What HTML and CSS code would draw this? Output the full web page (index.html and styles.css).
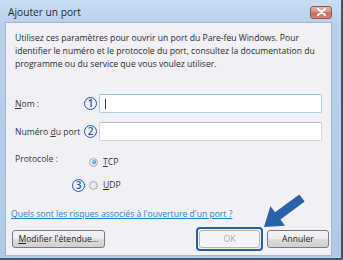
FILE: index.html
```html
<!DOCTYPE html>
<html lang="fr">
<head>
<meta charset="utf-8">
<link rel="stylesheet" href="styles.css">
</head>
<body>
<div class="window">
  <div class="titlebar">
    <span class="title">Ajouter un port</span>
    <span class="close"><svg width="11" height="8" viewBox="0 0 11 8"><path d="M2 1 L9 7 M9 1 L2 7" stroke="#fff" stroke-width="2.2" stroke-linecap="round"/></svg></span>
  </div>
  <div class="content">
    <p class="intro">Utilisez ces paramètres pour ouvrir un port du Pare-feu Windows. Pour identifier le numéro et le protocole du port, consultez la documentation du programme ou du service que vous voulez utiliser.</p>
    <div class="row row-name">
      <span class="label"><u>N</u>om :</span>
      <span class="num">1</span>
      <div class="input focus"><span class="caret"></span></div>
    </div>
    <div class="row row-port">
      <span class="label">Numéro <u>d</u>u port</span>
      <span class="num">2</span>
      <div class="input"></div>
    </div>
    <div class="proto">
      <span class="label plabel">Protocole :</span>
      <div class="radios">
        <div class="radio-row"><span class="radio on"></span><span class="rlabel"><u>T</u>CP</span></div>
        <div class="radio-row"><span class="num num3">3</span><span class="radio"></span><span class="rlabel"><u>U</u>DP</span></div>
      </div>
    </div>
    <a class="link" href="#">Quels sont les risques associés à l'ouverture d'un port ?</a>
    <div class="buttons">
      <button class="btn modify"><u>M</u>odifier l'étendue...</button>
      <span class="spacer"></span>
      <span class="focusring"><button class="btn ok" disabled>OK</button></span>
      <button class="btn cancel">Annuler</button>
    </div>
  </div>
  <svg class="arrow" width="343" height="260" viewBox="0 0 343 260">
    <polygon points="264,227 285,225.8 280.4,219.5 304.7,201.6 299.3,194.4 275,212.3 270.4,206" fill="#2b61a6"/>
  </svg>
</div>
</body>
</html>
```
FILE: styles.css
```css
* { box-sizing: border-box; }
html, body { margin: 0; padding: 0; }
body {
  width: 343px;
  height: 260px;
  overflow: hidden;
  font-family: "Open Sans", "Noto Sans", sans-serif;
  font-size: 8.6px;
  color: #222;
}
.window {
  position: relative;
  width: 343px;
  height: 260px;
  background: linear-gradient(180deg, #c9def2 0px, #b7d1ec 22px, #aecbea 100%);
  border-right: 2px solid #3f5670;
  border-bottom: 2px solid #3f5670;
  display: flex;
  flex-direction: column;
}
.titlebar {
  height: 22px;
  flex: none;
  display: flex;
  align-items: center;
  padding: 0 9px 0 8px;
}
.title {
  flex: 1;
  font-size: 10.2px;
  color: #1c2a3a;
  padding-top: 1px;
}
.close {
  width: 22px;
  height: 13px;
  margin-top: 2px;
  border: 1px solid #8d5a52;
  border-radius: 3px;
  background: linear-gradient(180deg, #e6b3a8 0%, #d98b7e 45%, #c8675a 55%, #d4867a 100%);
  display: flex;
  align-items: center;
  justify-content: center;
}
.content {
  flex: 1;
  min-height: 0;
  overflow: hidden;
  margin: 0 9px 2px 5px;
  background: #f1f0f5;
  border: 1px solid #9fb7cf;
  padding: 9px 8px 0 8px;
  display: flex;
  flex-direction: column;
}
.intro {
  margin: 0 0 0 1px;
  line-height: 13px;
  color: #2a2a2a;
  width: 300px;
  flex: none;
}
.row {
  display: flex;
  align-items: center;
  height: 19px;
  flex: none;
}
.row-name { margin-top: 23px; }
.row-port { margin-top: 9px; }
.label {
  color: #333;
  margin-left: 1px;
}
.row .label { width: 69px; }
.num {
  width: 13px;
  height: 13px;
  border: 1.2px solid #1d5aa6;
  border-radius: 50%;
  color: #1d5aa6;
  font-size: 10px;
  line-height: 11px;
  text-align: center;
  font-weight: 600;
  display: inline-flex;
  justify-content: center;
  align-items: center;
  flex: none;
}
.input {
  margin-left: 2px;
  width: 223px;
  height: 19px;
  background: #fff;
  border: 1px solid #cfd3dc;
  border-top-color: #b9bec7;
  border-radius: 2px;
  display: flex;
  align-items: center;
}
.input.focus {
  border-color: #a9cbe8;
  border-top-color: #8fbce2;
}
.caret {
  width: 1px;
  height: 10px;
  background: #333;
  margin-left: 5px;
}
.proto {
  margin-top: 12px;
  display: flex;
  flex: none;
}
.plabel { width: 74px; flex: none; }
.radios {
  display: flex;
  flex-direction: column;
}
.radio-row {
  display: flex;
  align-items: center;
  height: 14px;
  margin-top: 2px;
}
.radio-row + .radio-row { margin-top: 9px; margin-left: -17px; }
.num3 { margin-right: 4px; }
.radio {
  width: 9px;
  height: 9px;
  border-radius: 50%;
  border: 1px solid #a9acb2;
  background: radial-gradient(circle at 40% 40%, #f4f4f4, #d5d7da);
  position: relative;
  flex: none;
}
.radio.on::after {
  content: "";
  position: absolute;
  left: 1.5px;
  top: 1.5px;
  width: 4px;
  height: 4px;
  border-radius: 50%;
  background: radial-gradient(circle at 35% 35%, #7fd0ff, #1a6fc0);
}
.rlabel {
  margin-left: 5px;
  color: #333;
}
.link {
  margin: 16px 0 0 -3px;
  color: #1f7fc5;
  text-decoration: underline;
  align-self: flex-start;
  line-height: 12px;
  flex: none;
}
.buttons {
  display: flex;
  align-items: center;
  margin: 7px 0 0 -2px;
  flex: none;
}
.spacer { flex: 1; }
.btn {
  font-family: inherit;
  font-size: 8.6px;
  height: 18px;
  padding: 0;
  border: 1px solid #777b80;
  border-radius: 3px;
  color: #222;
  background: linear-gradient(180deg, #f3f3f3 0%, #ececec 48%, #dcdcdc 52%, #d0d0d0 100%);
}
.modify { width: 93px; }
.focusring {
  border: 2px solid #2b5e9d;
  border-radius: 4px;
  padding: 1px;
  display: flex;
}
.ok {
  width: 61px;
  color: #a4a8ad;
  border-color: #b0b6bb;
  background: #f4f4f6;
}
.cancel {
  width: 62px;
  margin-left: 4px;
  margin-right: -6px;
}
.arrow {
  position: absolute;
  left: 0;
  top: 0;
  pointer-events: none;
}
```
